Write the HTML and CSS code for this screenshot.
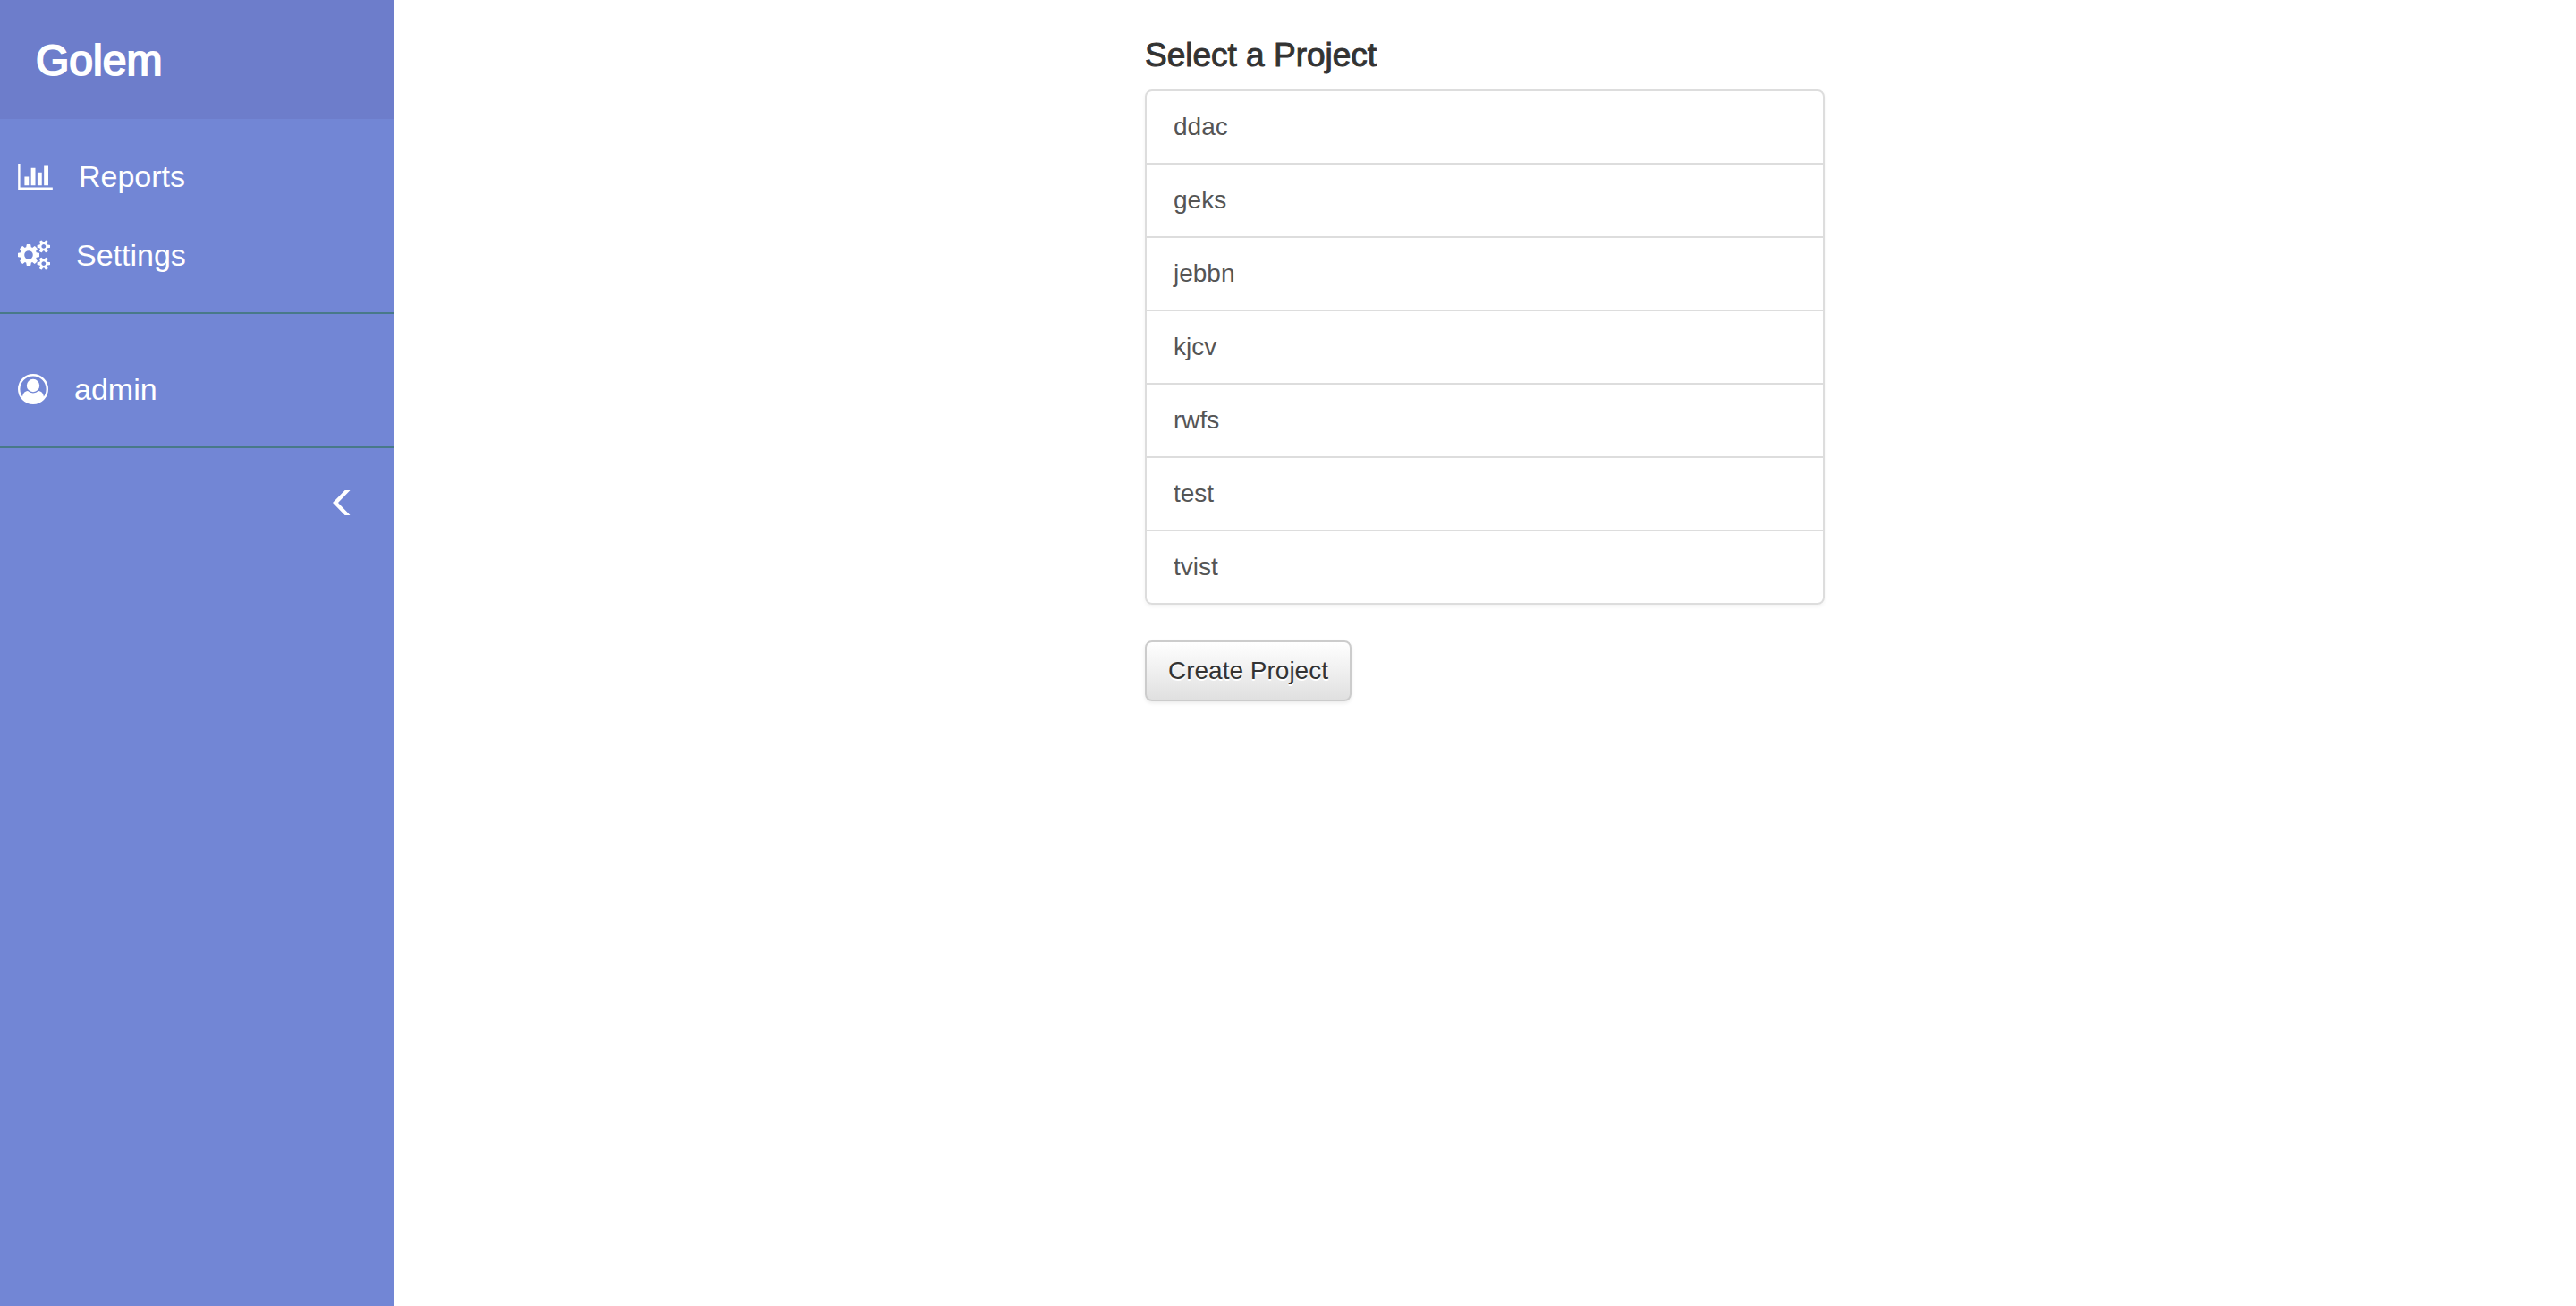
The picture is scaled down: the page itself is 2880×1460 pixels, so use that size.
FILE: index.html
```html
<!DOCTYPE html>
<html lang="en">
<head>
<meta charset="utf-8">
<title>Golem</title>
<link rel="stylesheet" href="styles.css">
</head>
<body>
<div class="layout">
  <aside class="sidebar">
    <header class="brand"><a href="#">Golem</a></header>
    <nav class="menu">
      <a class="menu-item" href="#">
        <svg width="39" height="29" viewBox="0 128 2048 1536" aria-hidden="true"><path d="M640 896v512h-256v-512h256zM1024 384v1024h-256v-1024h256zM2048 1536v128h-2048v-1536h128v1408h1920zM1408 640v768h-256v-768h256zM1792 256v1152h-256v-1152h256z"/></svg>
        <span>Reports</span>
      </a>
      <a class="menu-item" href="#">
        <svg width="36" height="34" viewBox="0 0 1920 1792" aria-hidden="true"><path d="M896 896q0-106-75-181t-181-75-181 75-75 181 75 181 181 75 181-75 75-181zM1664 1408q0-52-38-90t-90-38-90 38-38 90q0 53 37.500 90.500t90.500 37.500 90.500-37.500 37.500-90.500zM1664 384q0-52-38-90t-90-38-90 38-38 90q0 53 37.500 90.500t90.500 37.500 90.500-37.500 37.500-90.500zM1280 805v185q0 10-7 19.500t-16 10.500l-155 24q-11 35-32 76 34 48 90 115 7 11 7 20 0 12-7 19-23 30-82.500 89.500t-78.500 59.500q-11 0-21-7l-115-90q-37 19-77 31-11 108-23 155-7 24-30 24h-186q-11 0-20-7.500t-10-17.500l-23-153q-34-10-75-31l-118 89q-7 7-20 7-11 0-21-8-144-133-144-160 0-9 7-19 10-14 41-53t47-61q-23-44-35-82l-152-24q-10-1-17-9.500t-7-19.500v-185q0-10 7-19.500t16-10.500l155-24q11-35 32-76-34-48-90-115-7-11-7-20 0-12 7-20 22-30 82-89t79-59q11 0 21 7l115 90q34-18 77-32 11-108 23-154 7-24 30-24h186q11 0 20 7.500t10 17.500l23 153q34 10 75 31l118-89q8-7 20-7 11 0 21 8 144 133 144 160 0 8-7 19-12 16-42 54t-45 60q23 48 34 82l152 23q10 2 17 10.500t7 19.500zM1920 1338v140q0 16-149 31-12 27-30 52 51 113 51 138 0 4-4 7-122 71-124 71-8 0-46-47t-52-68q-20 2-30 2t-30-2q-14 21-52 68t-46 47q-2 0-124-71-4-3-4-7 0-25 51-138-18-25-30-52-149-15-149-31v-140q0-16 149-31 13-29 30-52-51-113-51-138 0-4 4-7 4-2 35-20t59-34 30-16q8 0 46 46.500t52 67.500q20-2 30-2t30 2q51-71 92-112l6-2q4 0 124 70 4 3 4 7 0 25-51 138 17 23 30 52 149 15 149 31zM1920 314v140q0 16-149 31-12 27-30 52 51 113 51 138 0 4-4 7-122 71-124 71-8 0-46-47t-52-68q-20 2-30 2t-30-2q-14 21-52 68t-46 47q-2 0-124-71-4-3-4-7 0-25 51-138-18-25-30-52-149-15-149-31v-140q0-16 149-31 13-29 30-52-51-113-51-138 0-4 4-7 4-2 35-20t59-34 30-16q8 0 46 46.500t52 67.500q20-2 30-2t30 2q51-71 92-112l6-2q4 0 124 70 4 3 4 7 0 25-51 138 17 23 30 52 149 15 149 31z"/></svg>
        <span>Settings</span>
      </a>
    </nav>
    <nav class="menu menu-user">
      <a class="menu-item" href="#">
        <svg width="34" height="34" viewBox="0 0 34 34" aria-hidden="true"><circle cx="17" cy="17" r="15.800" fill="none" stroke="#fff" stroke-width="2.400"/><circle cx="17" cy="13" r="7.200"/><path d="M4.800 27C5.300 22 7.500 19.200 11 19Q13.500 21.400 17 21.400T23 19C26.500 19.200 28.700 22 29.200 27A16 16 0 0 1 4.800 27Z"/></svg>
        <span>admin</span>
      </a>
    </nav>
    <div class="collapse">
      <button type="button" class="collapse-button" aria-label="Collapse sidebar">
        <svg width="20" height="28" viewBox="0 0 20 28" aria-hidden="true"><path d="M0 14L13.600 0H19.500L6 14L19.500 28H13.600Z"/></svg>
      </button>
    </div>
  </aside>
  <main class="content">
    <section class="projects">
      <h1>Select a Project</h1>
      <ul class="project-list">
        <li><a href="#">ddac</a></li>
        <li><a href="#">geks</a></li>
        <li><a href="#">jebbn</a></li>
        <li><a href="#">kjcv</a></li>
        <li><a href="#">rwfs</a></li>
        <li><a href="#">test</a></li>
        <li><a href="#">tvist</a></li>
      </ul>
      <button type="button" class="create-button">Create Project</button>
    </section>
  </main>
</div>
</body>
</html>
```
FILE: styles.css
```css
* {
  box-sizing: border-box;
}

body {
  margin: 0;
  background: #fff;
  color: #333;
  font-family: "Liberation Sans", Arial, sans-serif;
  font-size: 28px;
  line-height: 40px;
}

a {
  color: inherit;
  text-decoration: none;
}

.layout {
  display: flex;
  min-height: 100vh;
}

.sidebar {
  flex: 0 0 440px;
  background: #7286d5;
  color: #fff;
}

.brand {
  padding: 38px 40px 35px;
  background: #6d7dcb;
  font-size: 48px;
  line-height: 60px;
  -webkit-text-stroke: 2px currentColor;
}

.menu {
  padding: 20px 0;
  border-bottom: 2px solid #487989;
}

.menu-user {
  padding-top: 40px;
}

.menu-item {
  display: flex;
  align-items: center;
  gap: 29px;
  height: 88px;
  padding: 0 20px;
  font-size: 34px;
}

svg {
  display: block;
  fill: #fff;
}

.collapse {
  display: flex;
  justify-content: flex-end;
  padding: 39px 40px;
}

.collapse-button {
  padding: 8px;
  border: 0;
  background: none;
  cursor: pointer;
}

.content {
  flex: 1;
  padding: 42px 40px;
}

.projects {
  max-width: 760px;
  margin: 0 auto;
}

h1 {
  margin: 0 0 18px;
  font-size: 37px;
  font-weight: 400;
  line-height: 40px;
  -webkit-text-stroke: 1px currentColor;
}

.project-list {
  margin: 0 0 40px;
  padding: 0;
  border: 2px solid #ddd;
  border-radius: 8px;
  box-shadow: 0 2px 4px rgba(0, 0, 0, 0.05);
  color: #555;
  list-style: none;
}

.project-list li + li {
  border-top: 2px solid #ddd;
}

.project-list a {
  display: block;
  padding: 20px 30px;
}

.create-button {
  padding: 12px 24px;
  border: 2px solid #ccc;
  border-radius: 8px;
  background: linear-gradient(#fff, #e0e0e0);
  box-shadow: 0 2px 4px rgba(0, 0, 0, 0.08);
  color: #333;
  font: inherit;
  text-shadow: 0 2px 0 #fff;
  cursor: pointer;
}
```
